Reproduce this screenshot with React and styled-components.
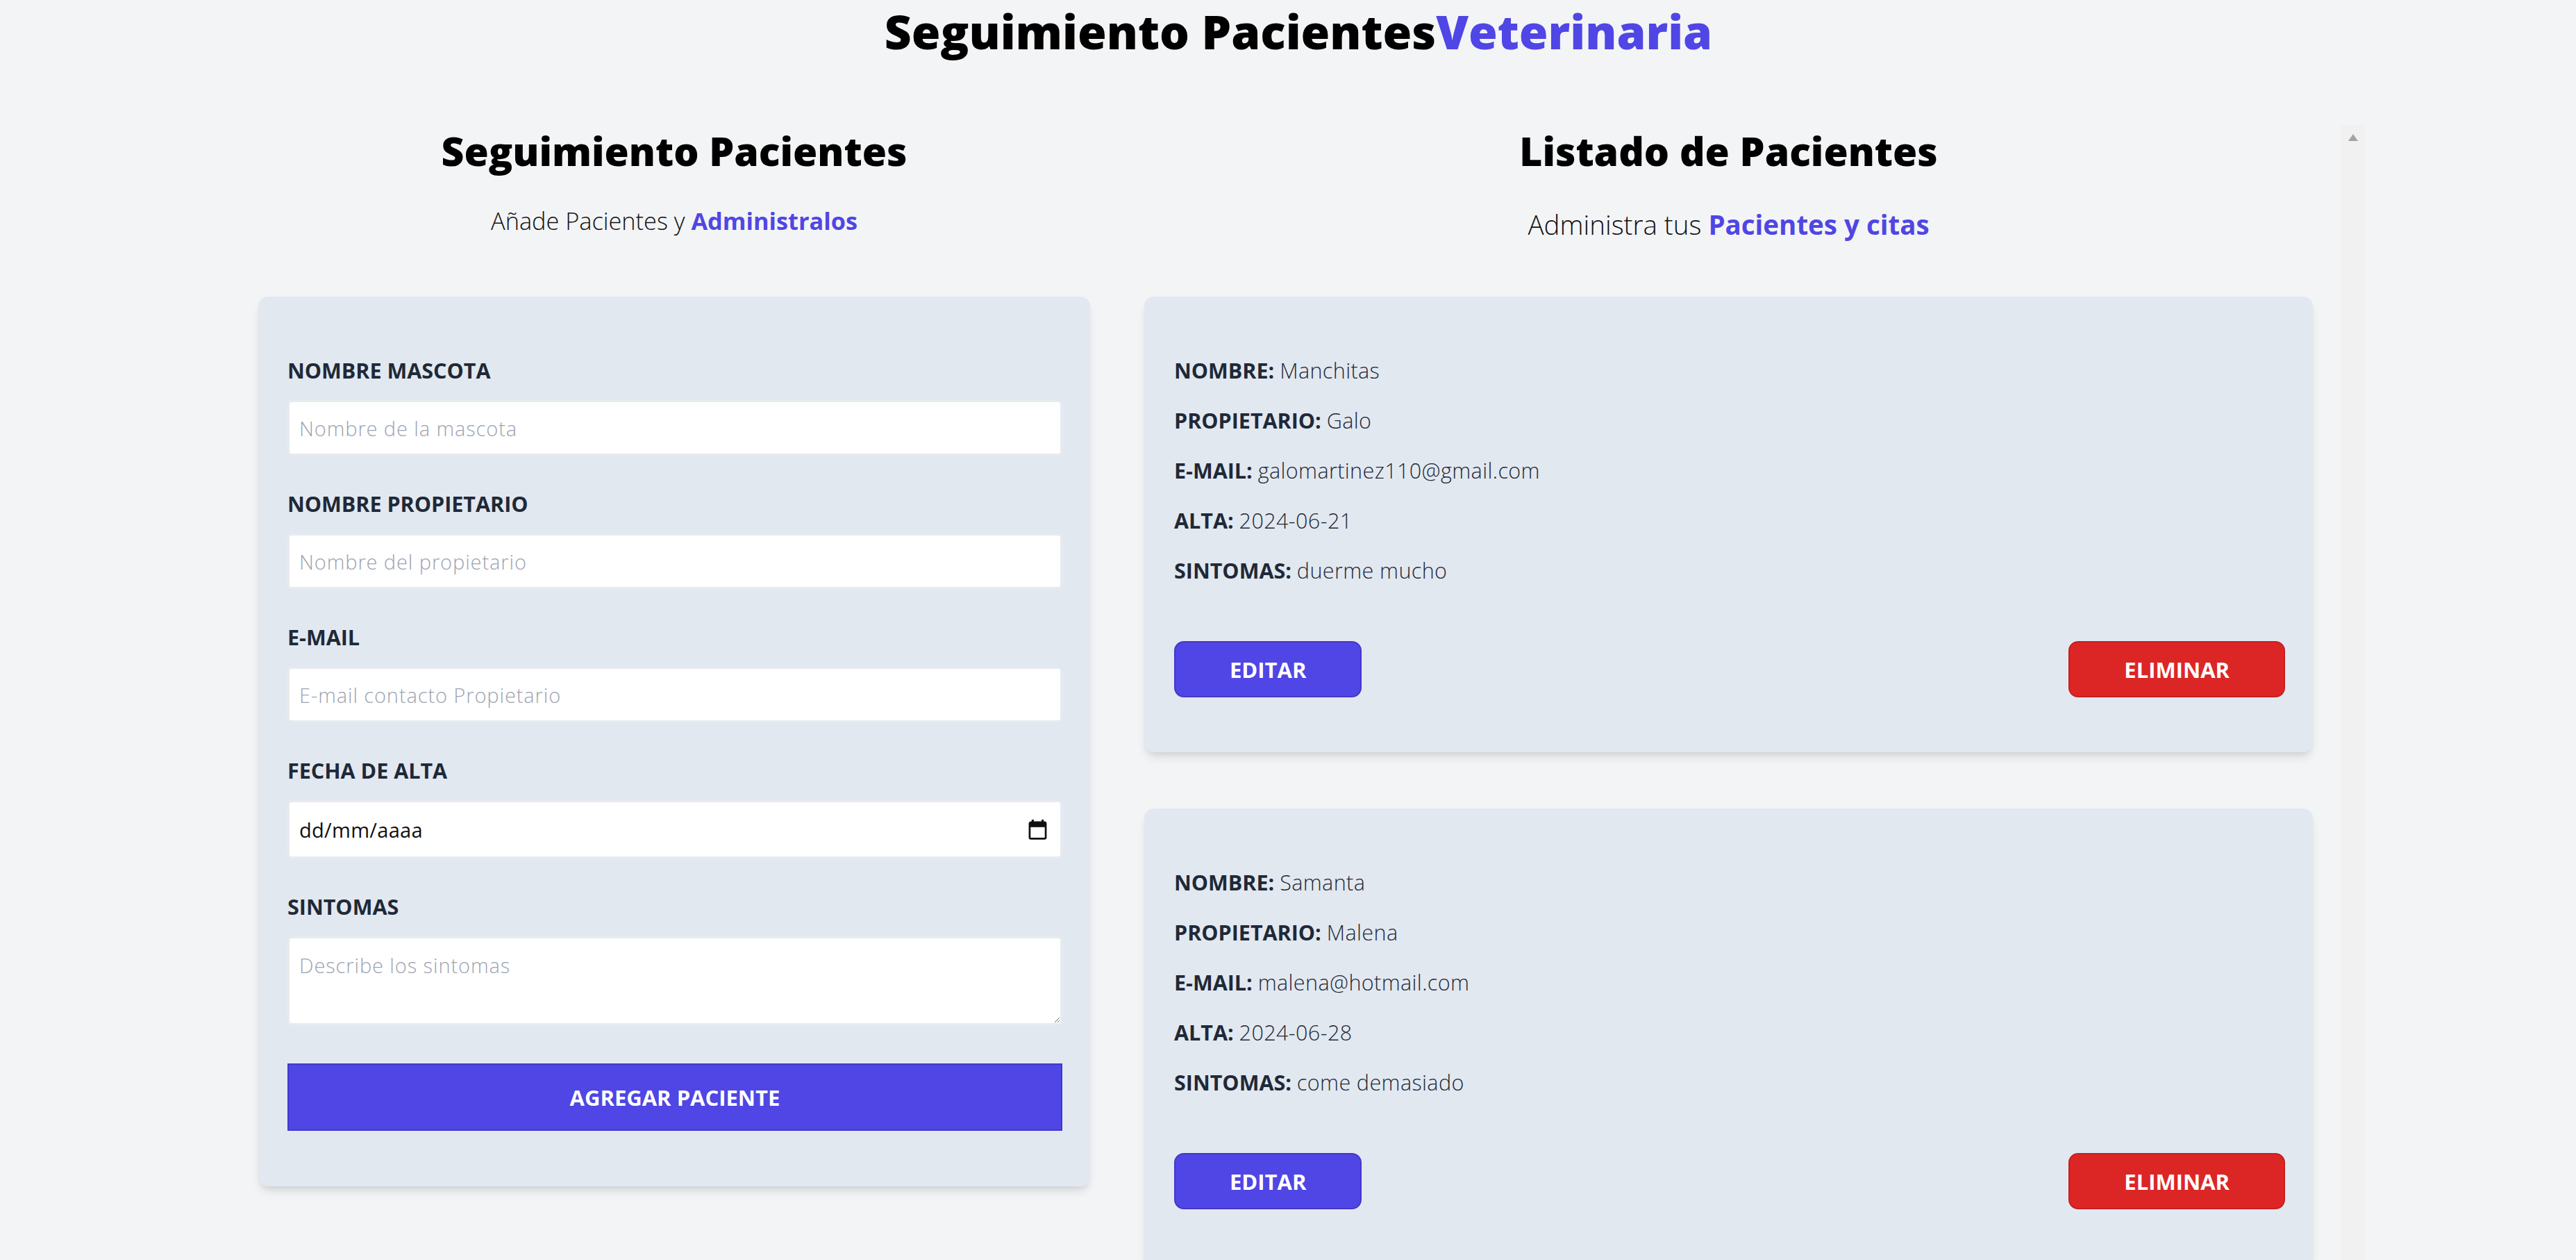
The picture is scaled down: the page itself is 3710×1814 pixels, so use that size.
import React from 'react';
import styled, { createGlobalStyle } from 'styled-components';

const FONT = `"Open Sans", "Noto Sans", sans-serif`;

const Global = createGlobalStyle`
  html, body { margin: 0; padding: 0; height: 100%; overflow: hidden; }
  body { background: #f3f4f6; font-family: ${FONT}; color: #000; }
  *, *::before, *::after { box-sizing: border-box; }
`;

const Page = styled.div`
  height: 1814px;
  overflow: hidden;
`;

const Title = styled.h1`
  margin: 0;
  padding-left: 30px;
  font-size: 67.5px;
  line-height: 90px;
  font-weight: 900;
  text-align: center;
  color: #000;
`;

const Accent = styled.span`
  color: #4f46e5;
`;

const Main = styled.main`
  display: flex;
  align-items: flex-start;
  margin-top: 88px;
  padding-left: 330px;
`;

const FormColumn = styled.section`
  flex: none;
  width: 1276px;
  padding: 0 36px 0 42px;
`;

const ListColumn = styled.section`
  flex: none;
  display: flex;
  width: 1800px;
  height: 100vh;
`;

const ListScroller = styled.div`
  flex: 1;
  min-width: 0;
  overflow-y: auto;
  scrollbar-width: none;
  padding: 0 41px 0 42px;
  &::-webkit-scrollbar { display: none; }
`;

const ScrollTrack = styled.div`
  flex: none;
  width: 34px;
  margin-top: 2px;
  background: #f1f1f1;
  display: flex;
  justify-content: center;
  padding-top: 13px;
`;

const ScrollArrow = styled.span`
  width: 0;
  height: 0;
  border-left: 7.5px solid transparent;
  border-right: 7.5px solid transparent;
  border-bottom: 10px solid #a3a3a3;
`;

const Heading = styled.h2`
  margin: 0;
  font-size: 57px;
  line-height: 78px;
  font-weight: 900;
  text-align: center;
  color: #000;
`;

const Subtitle = styled.p`
  margin: ${(p) => p.$mt}px 0 ${(p) => p.$mb}px;
  font-size: ${(p) => p.$size}px;
  line-height: ${(p) => p.$lh}px;
  font-weight: 300;
  text-align: center;
  color: #111;
`;

const Highlight = styled.span`
  font-weight: 700;
  color: #4f46e5;
`;

const Card = styled.div`
  background: #e2e8f0;
  border-radius: 14px;
  box-shadow: 0 10px 14px -3px rgba(0, 0, 0, 0.1), 0 4px 8px -4px rgba(0, 0, 0, 0.1);
`;

const FormCard = styled(Card).attrs({ as: 'form' })`
  padding: 86px 40px 80px 42px;
`;

const Field = styled.div`
  margin-bottom: ${(p) => (p.$last ? 55 : 49)}px;
`;

const Label = styled.label`
  display: block;
  font-size: 30.5px;
  line-height: 40px;
  font-weight: 700;
  text-transform: uppercase;
  color: #1f2937;
`;

const inputBase = `
  display: block;
  width: 100%;
  margin-top: 23px;
  background: #fff;
  border: 3px solid #e7ebf0;
  border-radius: 6px;
  font-family: ${FONT};
  font-size: 29px;
  font-weight: 300;
  letter-spacing: 0.9px;
  color: #111;
  outline: none;
`;

const TextInput = styled.input`
  ${inputBase}
  height: 80px;
  padding: 0 14px;
  &::placeholder { color: #9ca3af; }
`;

const DateBox = styled.div`
  ${inputBase}
  height: 84px;
  display: flex;
  align-items: center;
  padding: 0 19px 0 14px;
`;

const DateText = styled.input`
  flex: 1;
  min-width: 0;
  border: none;
  background: transparent;
  outline: none;
  padding: 0;
  font-family: ${FONT};
  font-size: 29px;
  font-weight: 400;
  letter-spacing: 0.3px;
  color: #111;
  &::placeholder { color: #111; }
`;

const TextArea = styled.textarea`
  ${inputBase}
  height: 128px;
  padding: 18px 14px 10px;
  line-height: 42px;
  &::placeholder { color: #9ca3af; }
`;

const SubmitButton = styled.button`
  display: block;
  width: 100%;
  height: 97px;
  background: #4f46e5;
  border: 2px solid #4338ca;
  color: #fff;
  font-family: ${FONT};
  font-size: 31px;
  font-weight: 700;
  text-transform: uppercase;
  cursor: pointer;
`;

const PatientCard = styled(Card)`
  padding: 86px 40px 79px 43px;
  & + & { margin-top: 81px; }
`;

const InfoRow = styled.p`
  margin: 0 0 32px;
  font-size: 30.5px;
  line-height: 40px;
  font-weight: 700;
  text-transform: uppercase;
  color: #1f2937;
`;

const InfoValue = styled.span`
  font-weight: 300;
  letter-spacing: 0.4px;
  text-transform: none;
  color: #1f2937;
`;

const Actions = styled.div`
  display: flex;
  justify-content: space-between;
  margin-top: 82px;
`;

const ActionButton = styled.button`
  height: 81px;
  padding: 0 78px;
  border-radius: 14px;
  border: 2px solid ${(p) => (p.$danger ? '#c81e1e' : '#4338ca')};
  background: ${(p) => (p.$danger ? '#dc2626' : '#4f46e5')};
  color: #fff;
  font-family: ${FONT};
  font-size: 31px;
  font-weight: 700;
  text-transform: uppercase;
  cursor: pointer;
`;

const patients = [
  { nombre: 'Manchitas', propietario: 'Galo', email: 'galomartinez110@gmail.com', alta: '2024-06-21', sintomas: 'duerme mucho' },
  { nombre: 'Samanta', propietario: 'Malena', email: 'malena@hotmail.com', alta: '2024-06-28', sintomas: 'come demasiado' },
];

function CalendarIcon() {
  return (
    <svg width="27" height="29" viewBox="0 0 14 15" aria-hidden="true">
      <rect x="2.5" y="0" width="1.6" height="2.5" fill="#111" />
      <rect x="9.9" y="0" width="1.6" height="2.5" fill="#111" />
      <rect x="1" y="2" width="12" height="12.2" rx="1" fill="none" stroke="#111" strokeWidth="1.4" />
      <rect x="1" y="2" width="12" height="3.6" fill="#111" />
    </svg>
  );
}

export default function App() {
  return (
    <Page>
      <Global />
      <Title>
        Seguimiento Pacientes<Accent>Veterinaria</Accent>
      </Title>
      <Main>
        <FormColumn>
          <Heading>Seguimiento Pacientes</Heading>
          <Subtitle $size={34.3} $lh={54} $mt={35} $mb={82}>
            Añade Pacientes y <Highlight>Administralos</Highlight>
          </Subtitle>
          <FormCard onSubmit={(e) => e.preventDefault()}>
            <Field>
              <Label htmlFor="mascota">Nombre Mascota</Label>
              <TextInput id="mascota" type="text" placeholder="Nombre de la mascota" />
            </Field>
            <Field>
              <Label htmlFor="propietario">Nombre Propietario</Label>
              <TextInput id="propietario" type="text" placeholder="Nombre del propietario" />
            </Field>
            <Field>
              <Label htmlFor="email">E-mail</Label>
              <TextInput id="email" type="email" placeholder="E-mail contacto Propietario" />
            </Field>
            <Field>
              <Label htmlFor="alta">Fecha de alta</Label>
              <DateBox>
                <DateText id="alta" type="text" placeholder="dd/mm/aaaa" />
                <CalendarIcon />
              </DateBox>
            </Field>
            <Field $last>
              <Label htmlFor="sintomas">Sintomas</Label>
              <TextArea id="sintomas" placeholder="Describe los sintomas" />
            </Field>
            <SubmitButton type="submit">Agregar Paciente</SubmitButton>
          </FormCard>
        </FormColumn>
        <ListColumn>
          <ListScroller>
            <Heading>Listado de Pacientes</Heading>
            <Subtitle $size={38.5} $lh={56} $mt={39} $mb={76}>
              Administra tus <Highlight>Pacientes y citas</Highlight>
            </Subtitle>
            {patients.map((p) => (
              <PatientCard key={p.nombre}>
                <InfoRow>Nombre: <InfoValue>{p.nombre}</InfoValue></InfoRow>
                <InfoRow>Propietario: <InfoValue>{p.propietario}</InfoValue></InfoRow>
                <InfoRow>E-mail: <InfoValue>{p.email}</InfoValue></InfoRow>
                <InfoRow>Alta: <InfoValue>{p.alta}</InfoValue></InfoRow>
                <InfoRow>Sintomas: <InfoValue>{p.sintomas}</InfoValue></InfoRow>
                <Actions>
                  <ActionButton type="button">Editar</ActionButton>
                  <ActionButton type="button" $danger>Eliminar</ActionButton>
                </Actions>
              </PatientCard>
            ))}
          </ListScroller>
          <ScrollTrack aria-hidden="true">
            <ScrollArrow />
          </ScrollTrack>
        </ListColumn>
      </Main>
    </Page>
  );
}
